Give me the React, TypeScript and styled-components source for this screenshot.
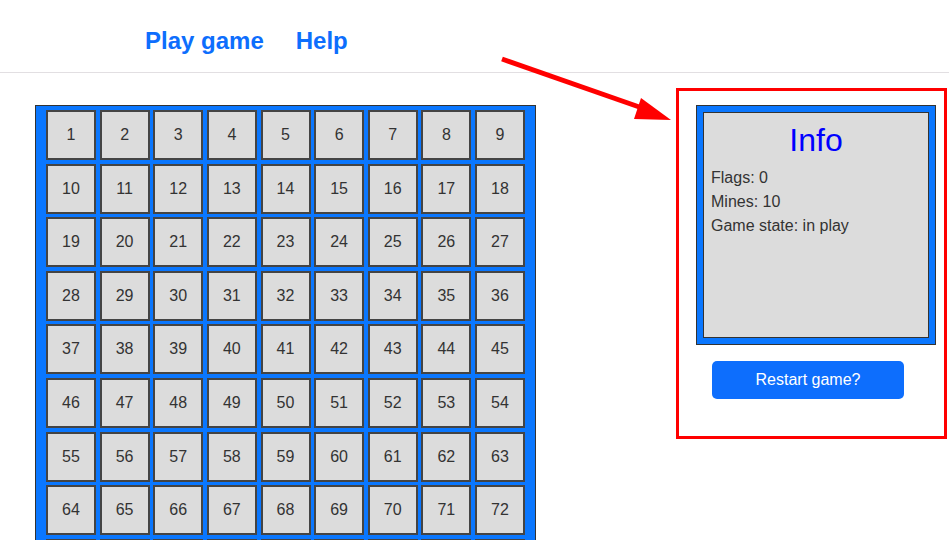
import React from "react";
import styled, { createGlobalStyle } from "styled-components";

const GlobalStyle = createGlobalStyle`
  html, body { margin: 0; padding: 0; background: #ffffff; }
  body { font-family: "Liberation Sans", Arial, sans-serif; color: #333333; }
  * { box-sizing: border-box; }
`;

const Page = styled.div`
  position: relative;
  width: 949px;
`;

const Header = styled.header`
  height: 73px;
  border-bottom: 1px solid #e2dfe2;
  display: flex;
  align-items: flex-start;
  padding: 27px 0 0 145px;
  gap: 32px;
`;

const NavLink = styled.a`
  font-size: 24px;
  font-weight: 700;
  color: #0d6efd;
  text-decoration: none;
  line-height: 27px;
`;

const Main = styled.main`
  display: flex;
  align-items: flex-start;
  padding: 15px 0 0 35px;
`;

const Board = styled.div`
  margin-top: 17px;
  width: 501px;
  border: 1px solid #333333;
  background: #0a77ff;
  padding: 4px 10px 10px 10px;
  display: grid;
  grid-template-columns: repeat(9, 50px);
  justify-content: space-between;
  row-gap: 3.6px;
`;

const Cell = styled.button`
  width: 50px;
  height: 50px;
  border: 2px solid #444444;
  background: #dcdcdc;
  color: #333333;
  font-family: "Liberation Sans", Arial, sans-serif;
  font-size: 16px;
  display: flex;
  align-items: center;
  justify-content: center;
  padding: 0;
  margin: 0;
`;

const InfoColumn = styled.section`
  margin-left: 140px;
  width: 271px;
  height: 351px;
  border: 3px solid #ff0000;
  padding: 14px 8px 0 17px;
  display: flex;
  flex-direction: column;
  align-items: flex-start;
`;

const InfoFrame = styled.div`
  width: 240px;
  height: 240px;
  border: 1px solid #333333;
  background: #0a77ff;
  padding: 6px;
`;

const InfoCard = styled.div`
  width: 100%;
  height: 100%;
  border: 1px solid #333333;
  background: #dcdcdc;
  padding: 9px 7px 7px 7px;
`;

const InfoTitle = styled.h1`
  margin: 0 0 7px 0;
  text-align: center;
  font-size: 32px;
  font-weight: 400;
  line-height: 37px;
  color: #0000ff;
`;

const InfoLine = styled.div`
  font-size: 16px;
  line-height: 24px;
  color: #333333;
`;

const RestartButton = styled.button`
  margin: 16px 0 0 16px;
  width: 192px;
  height: 38px;
  border: none;
  border-radius: 5px;
  background: #0d6efd;
  color: #ffffff;
  font-family: "Liberation Sans", Arial, sans-serif;
  font-size: 16px;
`;

const ArrowOverlay = styled.svg`
  position: absolute;
  left: 0;
  top: 0;
  pointer-events: none;
`;

export default function App() {
  const cells = Array.from({ length: 81 }, (_, i) => i + 1);
  return (
    <Page>
      <GlobalStyle />
      <Header>
        <NavLink href="#">Play game</NavLink>
        <NavLink href="#">Help</NavLink>
      </Header>
      <Main>
        <Board>
          {cells.map((n) => (
            <Cell key={n}>{n}</Cell>
          ))}
        </Board>
        <InfoColumn>
          <InfoFrame>
            <InfoCard>
              <InfoTitle>Info</InfoTitle>
              <InfoLine>Flags: 0</InfoLine>
              <InfoLine>Mines: 10</InfoLine>
              <InfoLine>Game state: in play</InfoLine>
            </InfoCard>
          </InfoFrame>
          <RestartButton>Restart game?</RestartButton>
        </InfoColumn>
      </Main>
      <ArrowOverlay width="949" height="540" viewBox="0 0 949 540">
        <line x1="502" y1="59" x2="645" y2="109" stroke="#ff0000" strokeWidth="5" />
        <polygon points="641,98 671,120 634,119" fill="#ff0000" />
      </ArrowOverlay>
    </Page>
  );
}
